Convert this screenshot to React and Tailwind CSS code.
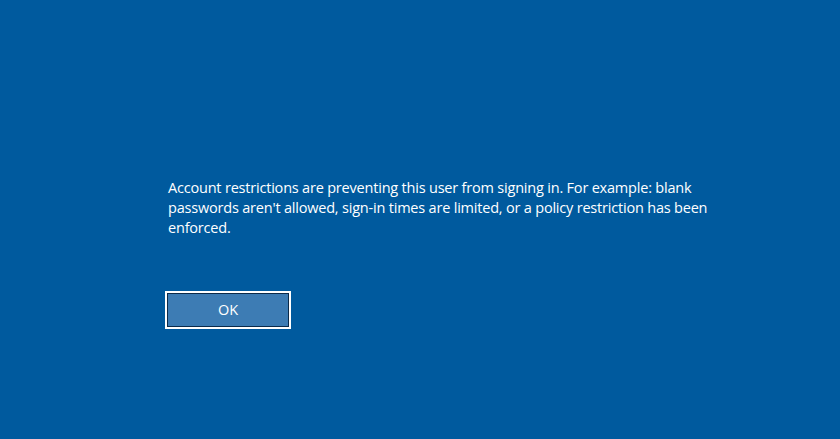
import React from 'react';

const App = () => {
  return (
    <div
      className="w-[840px] h-[439px] bg-[#005a9e] text-white overflow-hidden"
      style={{ fontFamily: '"Open Sans", "Noto Sans", sans-serif' }}
    >
      <div className="pt-[178px] pl-[168px]">
        {/* Message */}
        <p className="w-[560px] text-[14.5px] leading-[20px] tracking-[-0.2px]">
          Account restrictions are preventing this user from signing in. For example: blank
          passwords aren't allowed, sign-in times are limited, or a policy restriction has been
          enforced.
        </p>

        {/* OK button */}
        <button className="mt-[53px] -ml-[3px] w-[126px] h-[38px] border-2 border-white bg-[#0a2a4a] p-px">
          <span className="flex items-center justify-center w-full h-full bg-[#3d7cb4] text-[14.5px]">
            OK
          </span>
        </button>
      </div>
    </div>
  );
};

export default App;
